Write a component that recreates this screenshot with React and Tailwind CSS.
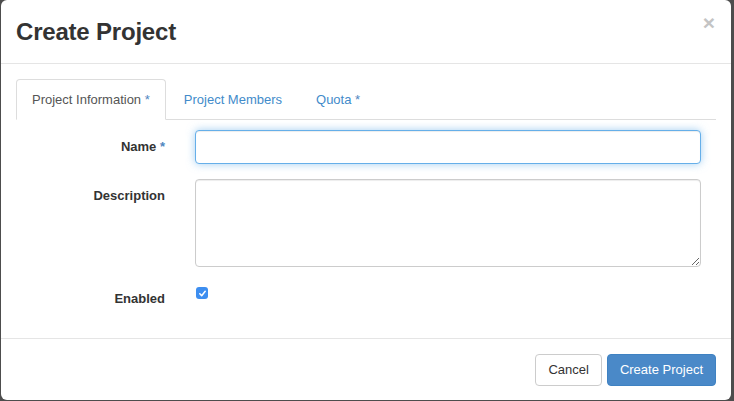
import React from "react";

const font = { fontFamily: '"Liberation Sans", Arial, sans-serif' };

function Star() {
  return <span className="text-[#4f86bf]"> *</span>;
}

function Tab({ children, active }) {
  return (
    <li className="-mb-px mr-[2px]">
      <a
        className={
          active
            ? "flex h-[41px] items-center rounded-t-[4px] border border-[#ddd] border-b-white bg-white px-[15px] pt-px text-[#555]"
            : "flex h-[41px] items-center rounded-t-[4px] border border-transparent px-[15px] pt-px text-[#428bca]"
        }
      >
        <span className="whitespace-pre">{children}</span>
      </a>
    </li>
  );
}

function Row({ label, children, top = "pt-0" }) {
  return (
    <div className="flex">
      <label className="w-[149px] pt-[8px] text-right text-[13px] font-bold leading-[18px] text-[#333]">
        {label}
      </label>
      <div className={`ml-[30px] w-[506px] ${top}`}>{children}</div>
    </div>
  );
}

export default function App() {
  return (
    <div className="h-[401px] w-[734px] overflow-hidden bg-[#4d4d4d] pl-px" style={font}>
      <div className="flex h-[400px] w-[730px] flex-col rounded-[6px] bg-white">
        {/* Header */}
        <div className="flex h-[64px] justify-between border-b border-[#e5e5e5] px-[15px]">
          <h4 className="self-center text-[24px] font-bold leading-[30px] tracking-[-0.2px] text-[#333]">Create Project</h4>
          <button className="mt-[12px] mr-[1px] self-start text-[21px] font-bold leading-[21px] text-[#c4c4c4]">×</button>
        </div>

        {/* Body */}
        <div className="h-[274px] px-[15px] pt-[15px]">
          <ul className="flex border-b border-[#ddd] text-[13px]">
            <Tab active>
              Project Information<Star />
            </Tab>
            <Tab>Project Members</Tab>
            <Tab>
              Quota<Star />
            </Tab>
          </ul>

          <div className="mt-[10px] flex flex-col gap-[15px]">
            <Row label={<>Name<Star /></>}>
              <input
                className="block h-[34px] w-full rounded-[4px] border border-[#66afe9] bg-white px-3 text-[13px] outline-none shadow-[inset_0_1px_1px_rgba(0,0,0,0.075),0_0_8px_rgba(102,175,233,0.6)]"
              />
            </Row>
            <Row label="Description">
              <textarea className="block h-[88px] w-full rounded-[4px] border border-[#ccc] bg-white px-3 py-2 text-[13px] outline-none shadow-[inset_0_1px_1px_rgba(0,0,0,0.075)]" />
            </Row>
            <Row label="Enabled" top="pt-[5px]">
              <span className="ml-px flex h-[12px] w-[12px] items-center justify-center rounded-[3px] bg-[#3d8ef0]">
                <svg width="9" height="9" viewBox="0 0 10 10" fill="none">
                  <path d="M2 5.3 L4.1 7.4 L8 2.6" stroke="white" strokeWidth="1.7" strokeLinecap="round" strokeLinejoin="round" />
                </svg>
              </span>
            </Row>
          </div>
        </div>

        {/* Footer */}
        <div className="flex flex-1 items-start justify-end gap-[5px] border-t border-[#e5e5e5] px-[15px] pt-[15px]">
          <button className="h-[32px] rounded-[4px] border border-[#ccc] bg-white px-[12px] text-[13px] text-[#333]">
            Cancel
          </button>
          <button className="h-[32px] rounded-[4px] border border-[#3f82c2] bg-[#4a89c8] px-[12px] text-[13px] text-white">
            Create Project
          </button>
        </div>
      </div>
    </div>
  );
}
